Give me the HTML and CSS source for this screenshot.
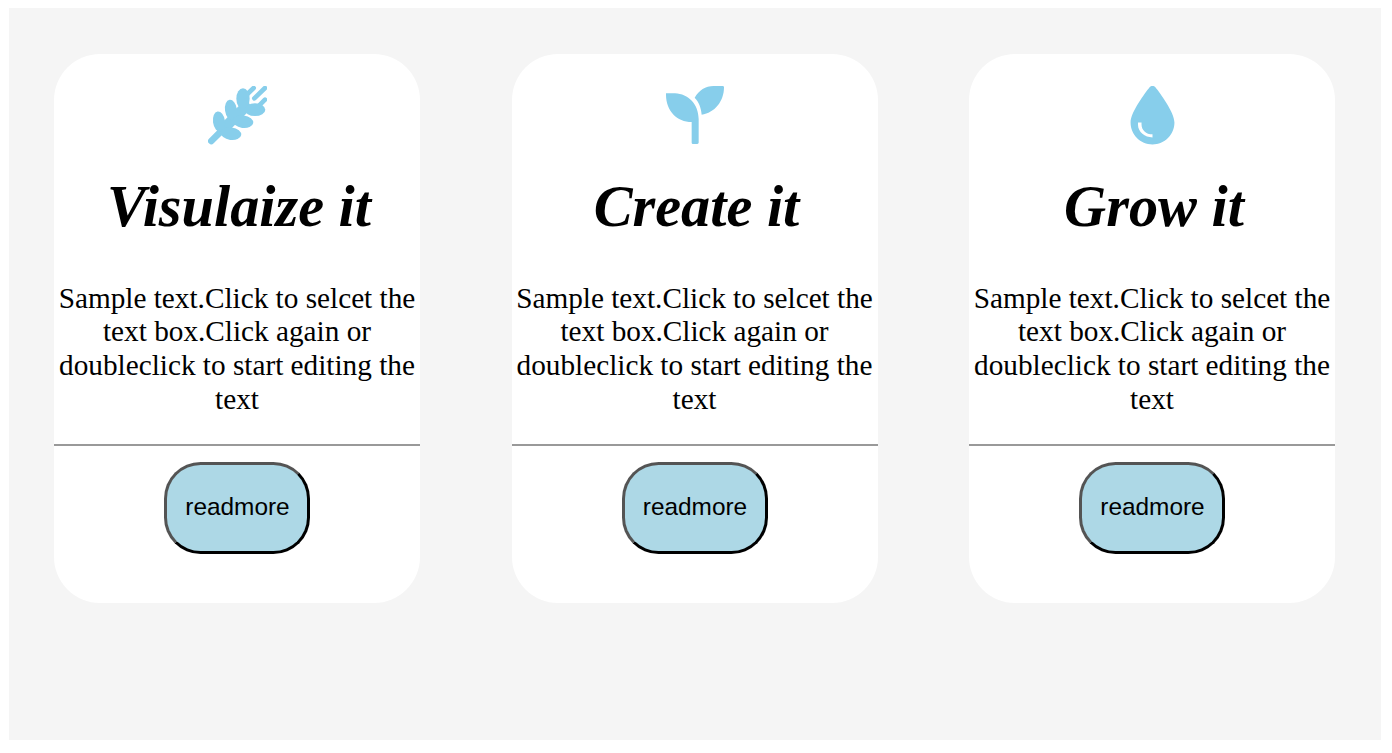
FILE: index.html
```html
<!DOCTYPE html>
<html lang="en">
<head>
<meta charset="utf-8">
<title>Cards</title>
<link rel="stylesheet" href="styles.css">
</head>
<body>
<main class="panel">
  <section class="card">
    <svg class="icon" viewBox="12 12 177 175.5">
      <path class="stem" d="M22 177L60 139"/>
      <path class="core" d="M58 141L124 75"/>
      <ellipse cx="45" cy="119" rx="18" ry="31" transform="rotate(-8 45 119)"/>
      <ellipse cx="81" cy="84" rx="18" ry="31" transform="rotate(-8 81 84)"/>
      <ellipse cx="117" cy="50" rx="20" ry="31"/>
      <ellipse cx="81" cy="155" rx="31" ry="19" transform="rotate(8 81 155)"/>
      <ellipse cx="117" cy="119" rx="31" ry="19" transform="rotate(8 117 119)"/>
      <ellipse cx="153" cy="83" rx="31" ry="19"/>
      <path class="awn" d="M124 42L149 18M151 49L183 18M160 76L183 53"/>
    </svg>
    <h1 class="title">Visulaize it</h1>
    <p class="text">Sample text.Click to selcet the text box.Click again or doubleclick to start editing the text</p>
    <hr class="rule">
    <button class="more">readmore</button>
  </section>
  <section class="card">
    <svg class="icon" viewBox="12 12 177 175.5"><path d="M15 34H42C82 36 113 67 113 111V182Q112 186 108 186H96Q92 186 92 182V120C48 120 15 86 15 38ZM101 47C114 25 133 12 158 12H185Q189 12 189 16C189 58 161 93 122 98C120 76 114 61 101 47Z"/></svg>
    <h1 class="title">Create it</h1>
    <p class="text">Sample text.Click to selcet the text box.Click again or doubleclick to start editing the text</p>
    <hr class="rule">
    <button class="more">readmore</button>
  </section>
  <section class="card">
    <svg class="icon" viewBox="-64 0 512 512"><path d="M192 512C86 512 0 426 0 320C0 228.8 130.2 57.7 166.6 11.7C172.6 4.2 181.5 0 191.1 0h1.8c9.6 0 18.5 4.2 24.5 11.7C253.8 57.7 384 228.8 384 320c0 106-86 192-192 192zM96 320H65V340C66 405 125 450 192 450V423C135 423 96 385 96 336z"/></svg>
    <h1 class="title">Grow it</h1>
    <p class="text">Sample text.Click to selcet the text box.Click again or doubleclick to start editing the text</p>
    <hr class="rule">
    <button class="more">readmore</button>
  </section>
</main>
</body>
</html>
```
FILE: styles.css
```css
* {
  box-sizing: border-box;
}

body {
  margin: 0;
  padding: 8px 11px 13px 9px;
  background: #fff;
  font-family: "Liberation Serif", "Times New Roman", serif;
}

.panel {
  display: flex;
  align-items: flex-start;
  gap: 91.5px;
  height: 732px;
  padding: 46px 45px;
  background: whitesmoke;
}

.card {
  display: flex;
  flex: 0 0 366px;
  flex-direction: column;
  align-items: center;
  height: 549px;
  padding-top: 32px;
  border-radius: 46px;
  background: #fff;
  color: #000;
  text-align: center;
}

.icon {
  width: 59px;
  height: 58.5px;
  fill: skyblue;
}

.stem,
.core,
.awn {
  fill: none;
  stroke: skyblue;
  stroke-linecap: round;
}

.stem {
  stroke-width: 20px;
}

.core {
  stroke-width: 32px;
}

.awn {
  stroke-width: 14px;
}

.title {
  margin: 28px 0 0 4px;
  font-size: 58.3px;
  font-style: italic;
  font-weight: bold;
  line-height: 67px;
  white-space: nowrap;
}

.text {
  width: 100%;
  margin: 42px 0 0;
  font-size: 29.25px;
  line-height: 33.7px;
}

.rule {
  width: 100%;
  height: 2px;
  margin: 27.5px 0 16px;
  border: 0;
  background: #999;
}

.more {
  width: 146px;
  height: 92px;
  padding: 0 0 2px 1px;
  border: 3px outset #000;
  border-radius: 36.6px;
  background: lightblue;
  color: #000;
  font-family: "Liberation Sans", Arial, sans-serif;
  font-size: 24.4px;
}
```
